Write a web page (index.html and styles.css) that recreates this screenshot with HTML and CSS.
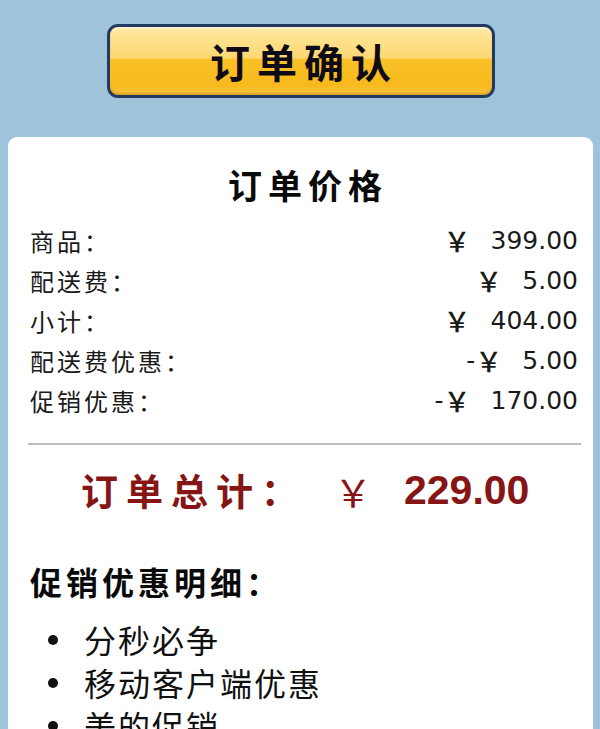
FILE: index.html
```html
<!DOCTYPE html>
<html lang="zh-CN">
<head>
<meta charset="utf-8">
<title>订单确认</title>
<link rel="stylesheet" href="styles.css">
</head>
<body>
<div class="page">
  <div class="btn-wrap">
    <button class="confirm-btn">订单确认</button>
  </div>
  <div class="card">
    <h2 class="card-title">订单价格</h2>
    <div class="rows">
      <div class="row"><span class="label">商品：</span><span class="value"><span class="yen">￥</span>399.00</span></div>
      <div class="row"><span class="label">配送费：</span><span class="value"><span class="yen">￥</span>5.00</span></div>
      <div class="row"><span class="label">小计：</span><span class="value"><span class="yen">￥</span>404.00</span></div>
      <div class="row"><span class="label">配送费优惠：</span><span class="value">-<span class="yen">￥</span>5.00</span></div>
      <div class="row"><span class="label">促销优惠：</span><span class="value">-<span class="yen">￥</span>170.00</span></div>
    </div>
    <hr class="sep">
    <div class="total"><span class="total-label">订单总计：</span><span class="total-yen">￥</span><span class="total-num">229.00</span></div>
    <h3 class="promo-title">促销优惠明细：</h3>
    <ul class="promo-list">
      <li>分秒必争</li>
      <li>移动客户端优惠</li>
      <li>美的促销</li>
    </ul>
  </div>
</div>
</body>
</html>
```

FILE: styles.css
```css
html, body {
  margin: 0;
  padding: 0;
  background: #9ec3db;
  height: 729px;
  overflow: hidden;
}
body {
  font-family: "Noto Sans CJK SC", "Liberation Sans", sans-serif;
  color: #111;
}
.page {
  display: flex;
  flex-direction: column;
  align-items: center;
}
.btn-wrap {
  padding-top: 24px;
  display: flex;
  justify-content: center;
  width: 100%;
}
.confirm-btn {
  width: 388px;
  height: 74px;
  margin-left: 1px;
  border: 3px solid #233a5f;
  border-radius: 11px;
  background: linear-gradient(to bottom, #fee9a0 0%, #fdd873 45%, #f9c127 48%, #f7b91c 85%, #f9c440 100%);
  box-shadow: inset 0 -2px 2px rgba(160, 100, 0, 0.35), inset 0 2px 2px rgba(255, 255, 255, 0.5);
  font-family: "Noto Sans CJK SC", sans-serif;
  font-size: 40px;
  font-weight: 700;
  letter-spacing: 7px;
  text-indent: 7px;
  line-height: 1;
  color: #0e0a16;
  padding: 0;
  display: flex;
  align-items: center;
  justify-content: center;
}
.card {
  margin-top: 39px;
  width: 585px;
  margin-left: 1px;
  background: #fff;
  border-radius: 9px 9px 0 0;
  padding: 28px 15px 0 22px;
  box-sizing: border-box;
  min-height: 600px;
}
.card-title {
  margin: 0;
  text-align: center;
  font-size: 34px;
  font-weight: 700;
  line-height: 40px;
  letter-spacing: 6px;
  text-indent: 8px;
  color: #0a0a0a;
}
.rows {
  margin-top: 15px;
  display: flex;
  flex-direction: column;
}
.row {
  display: flex;
  justify-content: space-between;
  align-items: center;
  height: 40px;
}
.label {
  font-size: 24px;
  letter-spacing: 3px;
  color: #1a1a1a;
}
.value {
  font-family: "DejaVu Sans", "Liberation Sans", sans-serif;
  font-size: 25px;
  color: #1a1a1a;
  display: flex;
  align-items: center;
}
.yen {
  font-family: "Noto Sans CJK SC", sans-serif;
  font-size: 27px;
  font-weight: 500;
  margin-right: 20px;
}
.sep {
  margin: 23px 0 0 -2px;
  width: 553px;
  border: 0;
  height: 2px;
  background: #bdbdbd;
}
.total {
  margin-top: 20px;
  height: 50px;
  display: flex;
  align-items: center;
  justify-content: flex-start;
  color: #861515;
  padding-left: 51px;
}
.total-label {
  font-size: 37px;
  font-weight: 700;
  letter-spacing: 8px;
}
.total-yen {
  margin-left: 28px;
  font-size: 38px;
  font-weight: 400;
}
.total-num {
  margin-left: 32px;
  font-family: "Liberation Sans", sans-serif;
  font-size: 41px;
  font-weight: 700;
}
.promo-title {
  margin: 46px 0 0 0;
  font-size: 32px;
  line-height: 40px;
  letter-spacing: 4px;
  font-weight: 700;
  color: #0a0a0a;
}
.promo-list {
  margin: 17px 0 0 0;
  padding: 0;
  list-style: none;
}
.promo-list li {
  display: flex;
  align-items: center;
  height: 43px;
  line-height: 43px;
  font-size: 32px;
  letter-spacing: 2px;
  color: #111;
}
.promo-list li::before {
  content: "";
  width: 10px;
  height: 10px;
  border-radius: 50%;
  background: #111;
  margin-left: 18px;
  margin-right: 26px;
  flex: none;
}
```
